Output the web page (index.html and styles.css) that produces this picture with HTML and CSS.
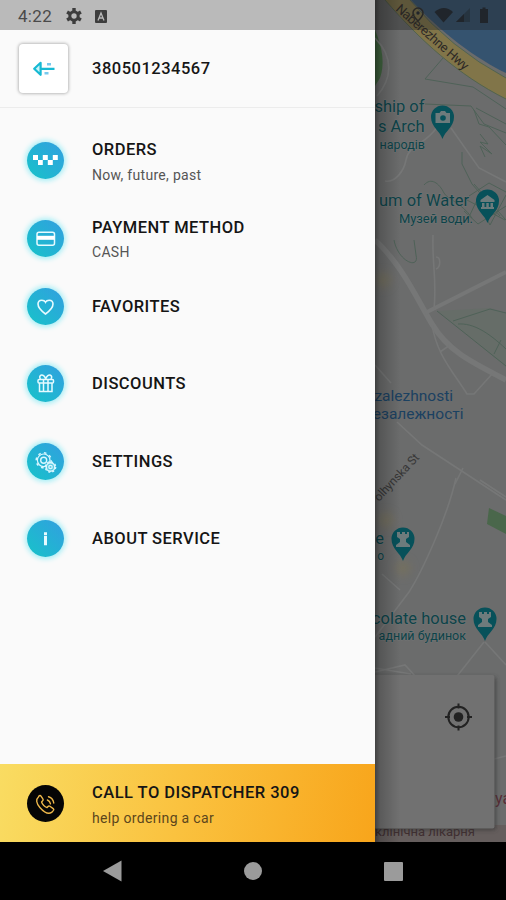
FILE: index.html
```html
<!DOCTYPE html>
<html lang="en">
<head>
<meta charset="utf-8">
<title>Taxi menu</title>
<link rel="stylesheet" href="styles.css">
</head>
<body>
<div class="phone">
  <div class="screen">
    <aside class="drawer">
      <header class="status">
        <span class="clock">4:22</span>
        <svg class="gear" width="16" height="16" viewBox="0 0 16 16"><circle cx="8" cy="8" r="4.2" fill="none" stroke="#3d3d3d" stroke-width="3"/><path d="M8 0v4M8 12v4M1.1 4l3.4 2M11.5 10l3.4 2M1.1 12l3.4-2M11.5 6l3.4-2" stroke="#3d3d3d" stroke-width="3.4"/></svg>
        <svg width="12" height="13" viewBox="0 0 12 13"><rect width="12" height="13" rx="1" fill="#3d3d3d"/><path d="M3 10.5 6 3l3 7.5M4.2 8h3.6" fill="none" stroke="#b9b9b9" stroke-width="1.3"/></svg>
      </header>
      <section class="profile">
        <div class="avatar">
          <svg width="24" height="18" viewBox="0 0 24 18"><path d="M22.500 8.800H9.200M8.600 2.800 2.200 8.800l6.400 6z" fill="#c9f4f7" stroke="#16b9d3" stroke-width="2.200" stroke-linejoin="round"/><path d="M15 4.300h4M12.500 13.300h4" stroke="#79c9ee" stroke-width="2.600"/></svg>
        </div>
        <div class="phone-number">380501234567</div>
      </section>
      <nav class="menu">
        <a class="item double orders">
          <span class="disc"><svg width="37" height="37" viewBox="0 0 37 37" fill="#fff"><path d="M6 13h5v5H6zM15.800 13h5v5h-5zM25.800 13h5v5h-5zM11 18h4.800v5H11zM20.800 18h5v5h-5z"/></svg></span>
          <span class="label"><b>ORDERS</b><small>Now, future, past</small></span>
        </a>
        <a class="item double payment">
          <span class="disc"><svg width="37" height="37" viewBox="0 0 37 37"><rect x="10" y="12.200" width="17.500" height="13" rx="2" fill="none" stroke="#e6fbff" stroke-width="1.500"/><path d="M10 17.800h17.500" stroke="#fff" stroke-width="4"/></svg></span>
          <span class="label"><b>PAYMENT METHOD</b><small>CASH</small></span>
        </a>
        <a class="item favorites">
          <span class="disc"><svg width="37" height="37" viewBox="0 0 37 37"><path d="M18.500 26C14.400 23.100 11 19.700 11 16.100c0-2.400 1.700-3.900 3.800-3.900 1.700 0 3 .7 3.700 2 .7-1.300 2-2 3.700-2 2.100 0 3.800 1.500 3.800 3.900 0 3.600-3.400 7-7.500 9.900z" fill="none" stroke="#e6fbff" stroke-width="1.600"/></svg></span>
          <span class="label"><b>FAVORITES</b></span>
        </a>
        <a class="item discounts">
          <span class="disc"><svg width="37" height="37" viewBox="0 0 37 37" fill="none" stroke="#e6fbff" stroke-width="1.500"><rect x="11" y="14.500" width="15.500" height="3.500" rx="1"/><path d="M12.500 18v8.500H25V18M16.500 14v12.500M21 14v12.500M18.700 14c-1-3-3-4.500-4.800-3.800-1.500.7-1.500 2.600-.4 3.800M18.700 14c1-3 3-4.500 4.800-3.800 1.500.7 1.500 2.600.4 3.800"/></svg></span>
          <span class="label"><b>DISCOUNTS</b></span>
        </a>
        <a class="item settings">
          <span class="disc"><svg width="37" height="37" viewBox="0 0 37 37" fill="none" stroke="#d9f7ff"><circle cx="16.700" cy="17.300" r="6.300" stroke-width="1.200"/><circle cx="16.700" cy="17.300" r="7.500" stroke-width="1.500" stroke-dasharray="2.600 3.290"/><circle cx="16.700" cy="17.300" r="3" stroke-width="1.400"/><circle cx="23.500" cy="24" r="4.300" fill="#5dcbe2" stroke-width="1.500"/><circle cx="23.500" cy="24" r="5.200" stroke-width="1.300" stroke-dasharray="2.100 1.980"/><circle cx="23.500" cy="24" r="1.700" stroke-width="1.300"/></svg></span>
          <span class="label"><b>SETTINGS</b></span>
        </a>
        <a class="item about">
          <span class="disc"><svg width="37" height="37" viewBox="0 0 37 37"><path d="M18.500 12.300v2.600M17 17.300h1.500v8" fill="none" stroke="#e6fbff" stroke-width="3"/></svg></span>
          <span class="label"><b>ABOUT SERVICE</b></span>
        </a>
      </nav>
      <a class="call">
        <span class="disc dark"><svg width="37" height="37" viewBox="-1.200 -1.200 39.400 39.400" fill="none" stroke="#eeb84b" stroke-width="1.500" stroke-linejoin="round" stroke-linecap="round"><path d="M11 11.500c-3 2.500-2.400 6.800 1.500 11.200 4.200 4.800 9.200 7.600 12.500 5.300l2-2.200c.5-.7.4-1.400-.3-1.900l-3.500-2.500c-.7-.5-1.500-.3-2 .3l-1 1.200c-2.300-.8-5-3.600-5.900-6l1.200-1.200c.6-.6.7-1.300.2-2l-2-3.100c-.5-.8-1.500-.8-2.100-.1z"/><path d="M20.500 14.800c1.800.7 3 2.200 3.300 4M21.700 11.300c3.100 1 5.200 3.500 5.600 6.700"/></svg></span>
        <span class="label"><b>CALL TO DISPATCHER 309</b><small>help ordering a car</small></span>
      </a>
    </aside>
    <main class="map">
      <svg width="131" height="842" viewBox="375 0 131 842">
        <defs>
          <linearGradient id="edge"><stop offset="0" stop-color="#000" stop-opacity=".42"/><stop offset=".2" stop-color="#000" stop-opacity=".2"/><stop offset="1" stop-color="#000" stop-opacity="0"/></linearGradient>
          <filter id="soft" x="-20%" y="-20%" width="140%" height="140%"><feGaussianBlur stdDeviation="2"/></filter>
          <filter id="haze" x="-100%" y="-100%" width="300%" height="300%"><feGaussianBlur stdDeviation="4"/></filter>
          <path id="pin" d="M0 17C-2.500 9-11.500 5-11.500-5a11.500 11.500 0 0 1 23 0C11.500 5 2.500 9 0 17z" fill="#07515a"/>
          <path id="hwy" d="M395 10 470 76"/>
        </defs>
        <rect x="375" width="131" height="842" fill="#6b6c6c"/>
        <path d="M375 30Q387 58 380 78L375 86z" fill="#40643f"/>
        <path d="M411 0h95v73C478 60 440 32 411 0z" fill="#35536f"/>
        <path d="M385 0h25Q450 48 506 78v21C458 75 420 40 385 0z" fill="#817549"/>
        <path d="M385 0C420 40 458 75 506 99M410 0Q450 48 506 78" fill="none" stroke="#52644e"/>
        <path d="M489 508l17 8v18l-19-10z" fill="#4a674b"/>
        <path d="M438 311 490 308 506 313v54z" fill="#666d68"/>
        <g filter="url(#haze)" fill="#77715b" opacity=".7"><circle cx="383" cy="280" r="8"/><circle cx="386" cy="520" r="8"/><circle cx="403" cy="568" r="8"/></g>
        <g fill="none" stroke="#767777">
          <path d="M375 240C402 265 416 297 432 324S471 362 506 380" stroke-width="5.500"/>
          <path d="M425 313 506 272" stroke-width="4"/>
          <path d="M433 235C432 265 437 280 434 309M436 257c5 0 5 10 0 12M375 38c20 20 16 42 2 58M385 181c10 2 19-10 21-21 4-18 19-14 31-33M451 128l28 40 27 14M432 324c4 30 22 49 35 70h7l19-21M440 352l10-7M375 365l16 18M397 422l25 23 84 55M463 468l-8 16" stroke-width="1.600"/>
          <path d="M456 478Q450 505 435 540T409 592L375 637M480 480l26 17M484 642l-30 38M375 672l30-7 12 13M485 642l21 23M382 574l18 16M490 760l16-4M375 668l36 6" stroke-width="1.600"/>
        </g>
        <g fill="none" stroke="#4f6258">
          <path d="M443 58 425 79l48 8 33 22M425 104l46 2 13 18 22 9M476 108l30 16M474 110l5 14 10 3 17 18M480 134l8 10-8-2 12 12-12-8 5 11M462 152v12l10 20 28 32M424 185c7-8 15-2 20 8 3 6 18 10 28 25M394 240c4 22 26 30 22 15l-2-15"/>
          <path d="M437 311 506 366M453 321l37-12 16 4M458 324c15-1 30 8 48 25M501 340l-7 14"/>
          <path d="M469 196l20-13 17 9M464 211l14 13 28-18M468 219l9-19 13 25 16-30M474 184l32 36M467 200l38 20"/>
        </g>
        <g fill="#0d4349" font-family="Roboto" stroke="#737575" stroke-width="1" paint-order="stroke">
          <text x="424.500" y="112" text-anchor="end" font-size="16.500">ship of</text>
          <text x="424.500" y="132" text-anchor="end" font-size="16.500">s Arch</text>
          <text x="425" y="149" text-anchor="end" font-size="12.500">народів</text>
          <text x="469" y="206" text-anchor="end" font-size="16.500">um of Water</text>
          <text x="399" y="223" textLength="74" font-size="13">Музей води.</text>
          <text x="384" y="544" text-anchor="end" font-size="16.500">e</text>
          <text x="384" y="560" text-anchor="end" font-size="12">о</text>
          <text x="466" y="624" text-anchor="end" font-size="16.500">colate house</text>
          <text x="466" y="640" text-anchor="end" font-size="12.500">адний будинок</text>
        </g>
        <g fill="#1b4161" font-family="Roboto">
          <text x="453" y="401" text-anchor="end" font-size="15.500">zalezhnosti</text>
          <text x="463.500" y="419" text-anchor="end" font-size="15.500">езалежності</text>
        </g>
        <text font-family="Roboto" font-size="13" fill="#2e2926"><textPath href="#hwy" textLength="92">Naberezhne Hwy</textPath></text>
        <text font-family="Roboto" font-size="12" fill="#373737" transform="translate(379 502) rotate(-47)" textLength="60">olhynska St</text>
        <use href="#pin" x="442.500" y="122"/><use href="#pin" x="487.500" y="206"/><use href="#pin" x="403" y="544"/><use href="#pin" x="485" y="624"/>
        <g fill="#6d7b7c">
          <path d="M435.500 113h4l1.500-2h4l1.500 2h3.500v10h-14.500z"/><circle cx="443" cy="118" r="2.800" fill="#07515a"/>
          <path d="M480.500 200l7-5 7 5v2h-14zM482 203h2.500v4H482zm4.300 0h2.500v4h-2.500zm4.200 0h2.500v4h-2.500zM481 207h13v2h-13z"/>
          <path id="rook" d="M397 532h3v2h2v-2h3v2h2v-2h2v5l-3 2v3l4 3v2h-14v-2l4-3v-3l-3-2z"/>
          <use href="#rook" x="82" y="80"/>
        </g>
        <path d="M375 825h131v17H375z" fill="#655e5d"/>
        <text x="475" y="836" text-anchor="end" font-family="Roboto" font-size="13" fill="#402f31">клінічна лікарня</text>
        <text x="495" y="804" font-family="Roboto" font-size="16" fill="#582d36">ya</text>
        <rect x="360" y="677" width="136" height="153" rx="2" fill="#333" opacity=".65" filter="url(#soft)"/>
        <rect x="360" y="675" width="134.500" height="153.500" rx="2" fill="#717171"/>
        <g stroke="#222" fill="none" stroke-width="2"><circle cx="458.500" cy="717" r="10.200"/><path d="M458.500 703.500v5M458.500 725.500v5M445 717h5M467 717h5"/><circle cx="458.500" cy="717" r="4.800" fill="#222" stroke="none"/></g>
        <rect x="375" width="131" height="30" fill="#202020" opacity=".37"/>
        <g fill="#20252b">
          <path d="M434.500 12q9.500-8 18.500 0l-9.500 10.500z"/><path d="M470 8v14h-14z" opacity=".45"/><path d="M464 14v8h-8z"/><path d="M480 9h2.500V7.500h3V9h2.500v14h-8z"/>
          <path d="M418 21q-5-5-5-8a5 5 0 0 1 10 0q0 3-5 8z" fill="none" stroke="#292826" stroke-width="1.500"/><circle cx="418" cy="13" r="1.700"/>
        </g>
        <rect x="375" width="25" height="842" fill="url(#edge)"/>
      </svg>
    </main>
  </div>
  <footer class="navbar">
    <svg width="19" height="22" viewBox="0 0 19 22"><path d="M0 11 18.500.5v21z" fill="#9b9b9b"/></svg>
    <span class="home"></span>
    <span class="recent"></span>
  </footer>
</div>
</body>
</html>
```

FILE: styles.css
```css
* { box-sizing: border-box; }
body { margin: 0; font-family: Roboto, "Liberation Sans", sans-serif; }
.phone { width: 506px; height: 900px; display: flex; flex-direction: column; background: #000; overflow: hidden; }
.screen { display: grid; grid-template-columns: 375px 131px; height: 842px; }
.drawer { display: flex; flex-direction: column; background: #fafafa; height: 842px; }
.map svg { display: block; }
.status { height: 30px; flex: none; background: #bababa; display: flex; align-items: center; padding: 2px 0 0 18px; color: #4a4a4a; }
.clock { font-size: 17px; width: 48px; letter-spacing: .3px; }
.gear { margin-right: 13px; }
.profile { height: 78px; flex: none; display: flex; align-items: center; padding-left: 19px; border-bottom: 1px solid #ececec; }
.avatar { width: 49px; height: 49px; border-radius: 4px; background: #fff; box-shadow: 0 0 3px 1px #bbb; display: grid; place-items: center; margin-right: 24px; }
.phone-number { font-size: 16.5px; font-weight: 500; letter-spacing: .5px; color: #161616; }
.menu { flex: 1; padding: 34px 0 0 27px; }
.item, .call { display: flex; align-items: flex-start; gap: 28px; }
.item { height: 77.5px; }
.payment { height: 68px; }
.disc { width: 37px; height: 37px; flex: none; border-radius: 50%; background: linear-gradient(45deg, #17c3c9, #329fe0); box-shadow: 0 0 5px 2px #a9eff6; }
.disc svg { display: block; }
.dark { background: #050505; box-shadow: none; }
.label { display: flex; flex-direction: column; padding-top: 8px; white-space: nowrap; }
.label b { font-size: 16.5px; line-height: 22px; font-weight: 500; letter-spacing: .47px; color: #151515; }
.label small { font-size: 14px; line-height: 18px; margin-top: 5px; color: #555; letter-spacing: .3px; }
.payment .label small { margin-top: 4px; }
.double .label, .call .label { padding-top: 0; margin-top: -3px; }
.call { height: 78px; flex: none; padding: 21px 0 0 27px; background: linear-gradient(100deg, #f9dc62, #fac23f 48%, #f8a51b); }
.call .label small { color: #5c461c; letter-spacing: .33px; }
.navbar { height: 58px; display: flex; align-items: center; padding-left: 103px; }
.home { width: 18px; height: 18px; border-radius: 50%; background: #9b9b9b; margin-left: 122px; }
.recent { width: 19px; height: 19px; border-radius: 1px; background: #9b9b9b; margin-left: 122px; }
```
